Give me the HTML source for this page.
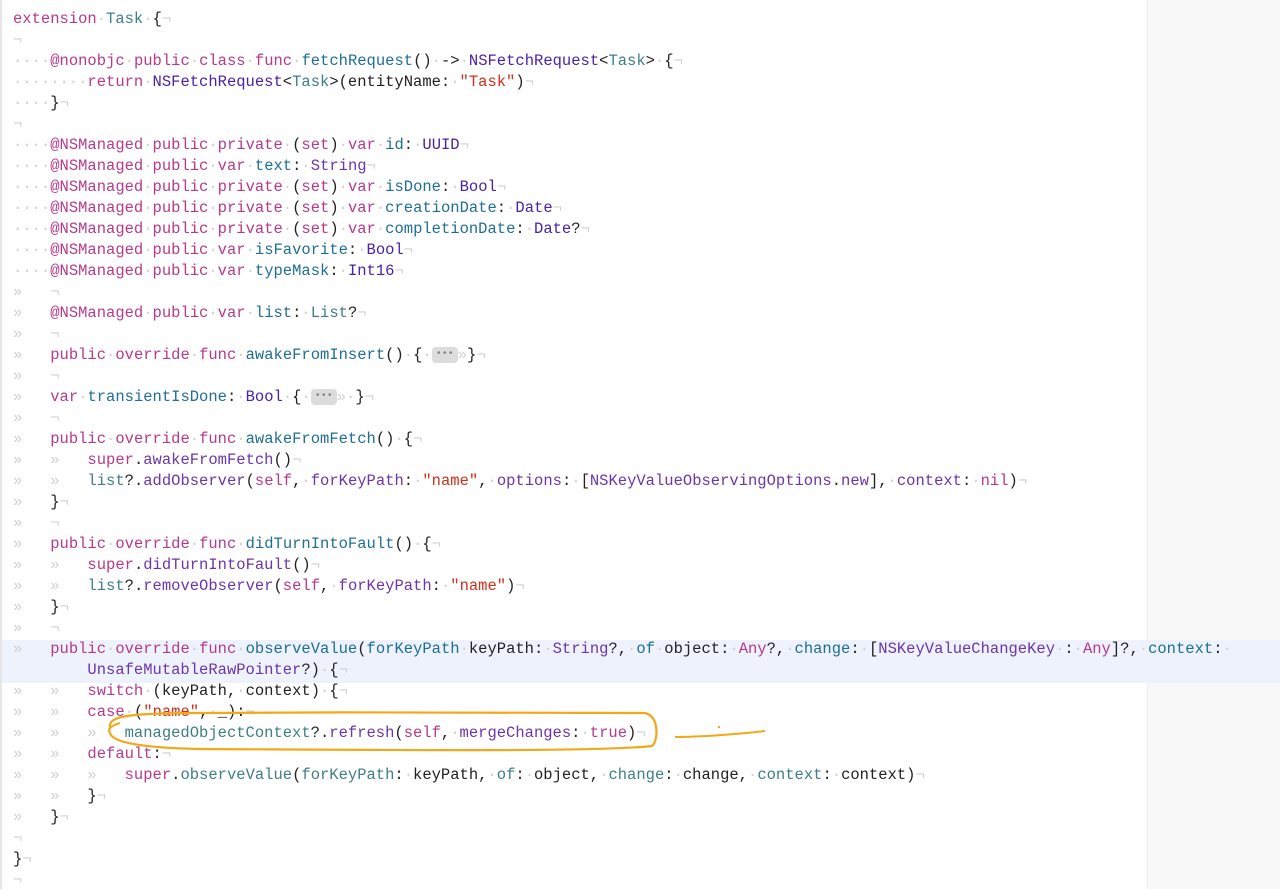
<!DOCTYPE html>
<html><head><meta charset="utf-8"><style>
body{margin:0;width:1280px;height:889px;background:#fff;overflow:hidden;position:relative;font-family:"Liberation Mono",monospace;font-size:15.5px;}
.side{position:absolute;left:1147px;top:0;width:133px;height:889px;background:#f8f8f8;border-left:1px solid #ececec;}
.hl{position:absolute;left:0;top:640px;width:1280px;height:43px;background:#edf2fc;}
.lg{position:absolute;left:0;top:0;width:2px;height:889px;background:#e6e6e6;}
.code{position:absolute;left:13px;top:9px;margin:0;font:inherit;line-height:21px;color:#222;white-space:pre;}
i{font-style:normal;color:#d0d0d0;}
kw{color:#b73a8a;} ty{color:#4b21a8;} pt{color:#3e7f87;} fn{color:#1f6e96;} st{color:#d12f1b;} pu{color:#6c36a9;}
mb{display:inline-block;background:#dcdcdc;color:#888;border-radius:4px;font-size:10px;line-height:16px;height:16px;padding:0 4px;vertical-align:top;margin-top:2px;}
</style></head><body>
<div class="side"></div>
<div class="hl"></div>
<div class="lg"></div>
<pre class="code"><kw>extension</kw><i>·</i><pt>Task</pt><i>·</i>{<i>¬</i>
<i>¬</i>
<i>····</i><kw>@nonobjc</kw><i>·</i><kw>public</kw><i>·</i><kw>class</kw><i>·</i><kw>func</kw><i>·</i><fn>fetchRequest</fn>()<i>·</i>-&gt;<i>·</i><ty>NSFetchRequest</ty>&lt;<pt>Task</pt>&gt;<i>·</i>{<i>¬</i>
<i>········</i><kw>return</kw><i>·</i><ty>NSFetchRequest</ty>&lt;<pt>Task</pt>&gt;(entityName:<i>·</i><st>"Task"</st>)<i>¬</i>
<i>····</i>}<i>¬</i>
<i>¬</i>
<i>····</i><kw>@NSManaged</kw><i>·</i><kw>public</kw><i>·</i><kw>private</kw><i>·</i>(<kw>set</kw>)<i>·</i><kw>var</kw><i>·</i><fn>id</fn>:<i>·</i><ty>UUID</ty><i>¬</i>
<i>····</i><kw>@NSManaged</kw><i>·</i><kw>public</kw><i>·</i><kw>var</kw><i>·</i><fn>text</fn>:<i>·</i><pu>String</pu><i>¬</i>
<i>····</i><kw>@NSManaged</kw><i>·</i><kw>public</kw><i>·</i><kw>private</kw><i>·</i>(<kw>set</kw>)<i>·</i><kw>var</kw><i>·</i><fn>isDone</fn>:<i>·</i><ty>Bool</ty><i>¬</i>
<i>····</i><kw>@NSManaged</kw><i>·</i><kw>public</kw><i>·</i><kw>private</kw><i>·</i>(<kw>set</kw>)<i>·</i><kw>var</kw><i>·</i><fn>creationDate</fn>:<i>·</i><ty>Date</ty><i>¬</i>
<i>····</i><kw>@NSManaged</kw><i>·</i><kw>public</kw><i>·</i><kw>private</kw><i>·</i>(<kw>set</kw>)<i>·</i><kw>var</kw><i>·</i><fn>completionDate</fn>:<i>·</i><ty>Date</ty>?<i>¬</i>
<i>····</i><kw>@NSManaged</kw><i>·</i><kw>public</kw><i>·</i><kw>var</kw><i>·</i><fn>isFavorite</fn>:<i>·</i><ty>Bool</ty><i>¬</i>
<i>····</i><kw>@NSManaged</kw><i>·</i><kw>public</kw><i>·</i><kw>var</kw><i>·</i><fn>typeMask</fn>:<i>·</i><ty>Int16</ty><i>¬</i>
<i>»   ¬</i>
<i>»   </i><kw>@NSManaged</kw><i>·</i><kw>public</kw><i>·</i><kw>var</kw><i>·</i><fn>list</fn>:<i>·</i><pt>List</pt>?<i>¬</i>
<i>»   ¬</i>
<i>»   </i><kw>public</kw><i>·</i><kw>override</kw><i>·</i><kw>func</kw><i>·</i><fn>awakeFromInsert</fn>()<i>·</i>{<i>·</i><mb>•••</mb><i>»</i>}<i>¬</i>
<i>»   ¬</i>
<i>»   </i><kw>var</kw><i>·</i><fn>transientIsDone</fn>:<i>·</i><ty>Bool</ty><i>·</i>{<i>·</i><mb>•••</mb><i>»</i><i>·</i>}<i>¬</i>
<i>»   ¬</i>
<i>»   </i><kw>public</kw><i>·</i><kw>override</kw><i>·</i><kw>func</kw><i>·</i><fn>awakeFromFetch</fn>()<i>·</i>{<i>¬</i>
<i>»   »   </i><kw>super</kw>.<pu>awakeFromFetch</pu>()<i>¬</i>
<i>»   »   </i><pt>list</pt>?.<pu>addObserver</pu>(<kw>self</kw>,<i>·</i><pu>forKeyPath</pu>:<i>·</i><st>"name"</st>,<i>·</i><pu>options</pu>:<i>·</i>[<pu>NSKeyValueObservingOptions</pu>.<pu>new</pu>],<i>·</i><pu>context</pu>:<i>·</i><kw>nil</kw>)<i>¬</i>
<i>»   </i>}<i>¬</i>
<i>»   ¬</i>
<i>»   </i><kw>public</kw><i>·</i><kw>override</kw><i>·</i><kw>func</kw><i>·</i><fn>didTurnIntoFault</fn>()<i>·</i>{<i>¬</i>
<i>»   »   </i><kw>super</kw>.<pu>didTurnIntoFault</pu>()<i>¬</i>
<i>»   »   </i><pt>list</pt>?.<pu>removeObserver</pu>(<kw>self</kw>,<i>·</i><pu>forKeyPath</pu>:<i>·</i><st>"name"</st>)<i>¬</i>
<i>»   </i>}<i>¬</i>
<i>»   ¬</i>
<i>»   </i><kw>public</kw><i>·</i><kw>override</kw><i>·</i><kw>func</kw><i>·</i><fn>observeValue</fn>(<fn>forKeyPath</fn><i>·</i>keyPath:<i>·</i><pu>String</pu>?,<i>·</i><fn>of</fn><i>·</i>object:<i>·</i><kw>Any</kw>?,<i>·</i><fn>change</fn>:<i>·</i>[<pu>NSKeyValueChangeKey</pu><i>·</i>:<i>·</i><kw>Any</kw>]?,<i>·</i><fn>context</fn>:<i>·</i>
<i>        </i><pu>UnsafeMutableRawPointer</pu>?)<i>·</i>{<i>¬</i>
<i>»   »   </i><kw>switch</kw><i>·</i>(keyPath,<i>·</i>context)<i>·</i>{<i>¬</i>
<i>»   »   </i><kw>case</kw><i>·</i>(<st>"name"</st>,<i>·</i>_):<i>¬</i>
<i>»   »   »   </i><pt>managedObjectContext</pt>?.<pu>refresh</pu>(<kw>self</kw>,<i>·</i><pu>mergeChanges</pu>:<i>·</i><kw>true</kw>)<i>¬</i>
<i>»   »   </i><kw>default</kw>:<i>¬</i>
<i>»   »   »   </i><kw>super</kw>.<pt>observeValue</pt>(<pt>forKeyPath</pt>:<i>·</i>keyPath,<i>·</i><pt>of</pt>:<i>·</i>object,<i>·</i><pt>change</pt>:<i>·</i>change,<i>·</i><pt>context</pt>:<i>·</i>context)<i>¬</i>
<i>»   »   </i>}<i>¬</i>
<i>»   </i>}<i>¬</i>
<i>¬</i>
}<i>¬</i>
<i>¬</i></pre>
<svg style="position:absolute;left:0;top:0" width="1280" height="889">
<path d="M110 727 C108 716 130 713 200 713 C350 712 520 712 645 713 C660 716 658 742 652 746 C600 752 400 750 200 749 C140 748 112 742 110 733 Q106 727 120 723" fill="none" stroke="#f2a818" stroke-width="2.2"/>
<path d="M675 737 C700 737 740 734 765 731" fill="none" stroke="#f2a818" stroke-width="2"/>
<path d="M718 727 l2 0" stroke="#f2a818" stroke-width="2"/>
</svg>
</body></html>
